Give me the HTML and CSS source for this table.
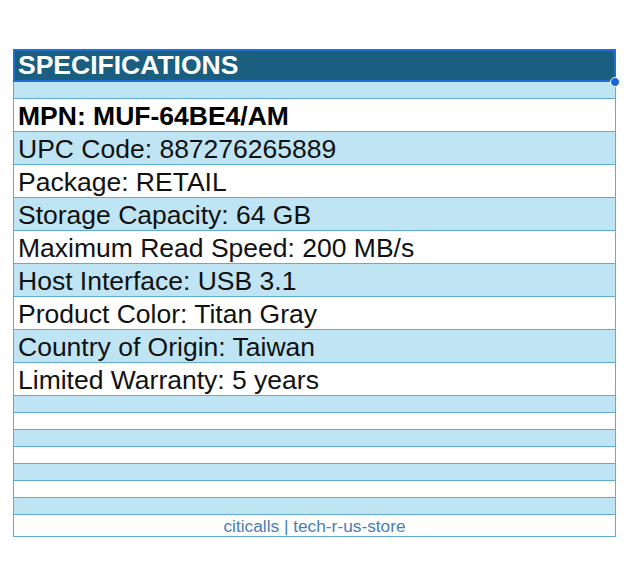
FILE: index.html
```html
<!DOCTYPE html>
<html>
<head>
<meta charset="utf-8">
<link rel="stylesheet" href="styles.css">
</head>
<body>
<div class="sheet">
  <div class="row head">SPECIFICATIONS<span class="handle"></span></div>
  <div class="row thin alt"></div>
  <div class="row strong">MPN: MUF-64BE4/AM</div>
  <div class="row alt">UPC Code: 887276265889</div>
  <div class="row">Package: RETAIL</div>
  <div class="row alt">Storage Capacity: 64 GB</div>
  <div class="row">Maximum Read Speed: 200 MB/s</div>
  <div class="row alt">Host Interface: USB 3.1</div>
  <div class="row">Product Color: Titan Gray</div>
  <div class="row alt">Country of Origin: Taiwan</div>
  <div class="row">Limited Warranty: 5 years</div>
  <div class="row thin alt"></div>
  <div class="row thin"></div>
  <div class="row thin alt"></div>
  <div class="row thin"></div>
  <div class="row thin alt"></div>
  <div class="row thin"></div>
  <div class="row thin alt"></div>
  <div class="row foot">citicalls | tech-r-us-store</div>
</div>
</body>
</html>
```
FILE: styles.css
```css
html, body {
  margin: 0;
  padding: 0;
  background: #ffffff;
}
body {
  font-family: "Liberation Sans", Arial, sans-serif;
}
.sheet {
  margin: 49px 0 0 13px;
  width: 601px;
  border-left: 1px solid #5eacd2;
  border-right: 1px solid #5eacd2;
  border-bottom: 1px solid #5eacd2;
}
.row {
  height: 31px;
  padding-top: 1px;
  border-bottom: 1px solid #5eacd2;
  padding-left: 4px;
  font-size: 26.5px;
  line-height: 32px;
  color: #111111;
  background: #ffffff;
  white-space: nowrap;
  box-sizing: content-box;
}
.row.alt {
  background: #bfe4f4;
}
.row.thin {
  height: 16px;
  padding-top: 0;
  line-height: 16px;
}
.row.strong {
  font-weight: bold;
  color: #000000;
}
.row.head {
  position: relative;
  margin: 0 -1px;
  height: 29px;
  padding-top: 0;
  line-height: 29px;
  padding-left: 3px;
  background: #1a5e80;
  color: #ffffff;
  font-weight: bold;
  border: 2px solid #1f6fd6;
}
.handle {
  position: absolute;
  right: -6px;
  bottom: -7px;
  width: 8px;
  height: 8px;
  border-radius: 50%;
  background: #1a66d9;
  border: 1px solid #ffffff;
}
.row.foot {
  height: 21px;
  padding-top: 0;
  line-height: 22px;
  border-bottom: none;
  padding-left: 0;
  text-align: center;
  font-size: 17.3px;
  color: #4a7db5;
}
```
